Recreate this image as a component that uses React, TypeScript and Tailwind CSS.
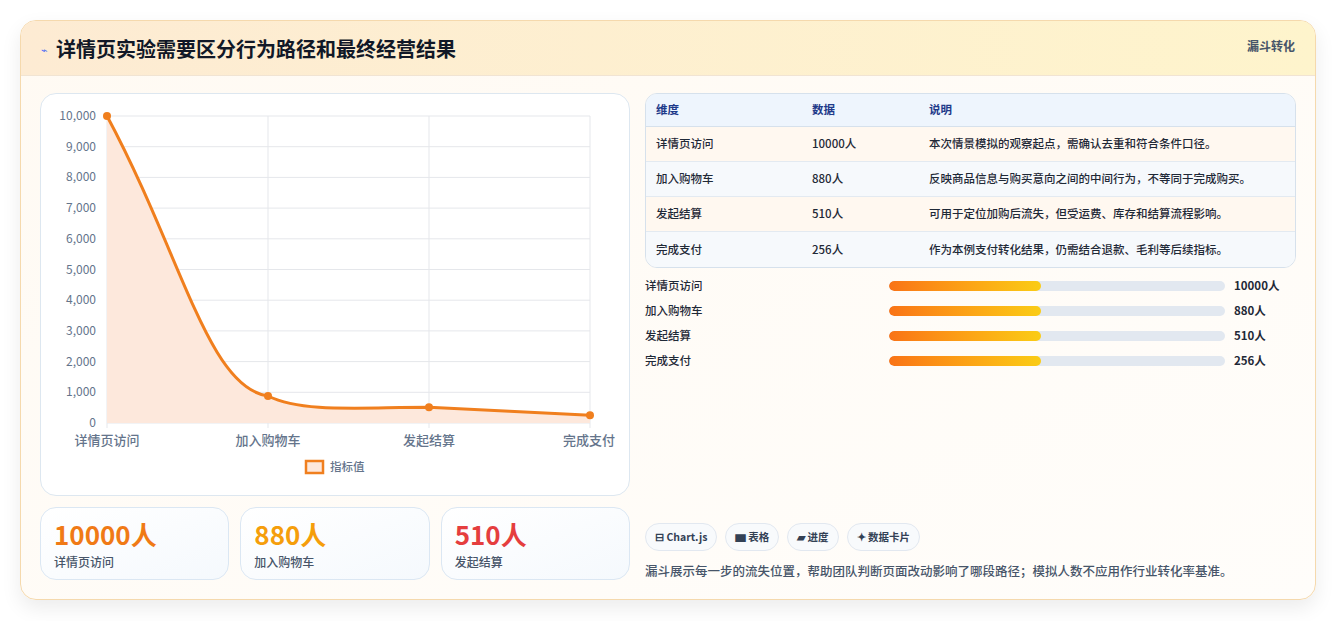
import React from "react";

const F = { fontFamily: '"Noto Sans CJK SC", "Noto Sans", sans-serif' };

const rows = [
  ["详情页访问", "10000人", "本次情景模拟的观察起点，需确认去重和符合条件口径。"],
  ["加入购物车", "880人", "反映商品信息与购买意向之间的中间行为，不等同于完成购买。"],
  ["发起结算", "510人", "可用于定位加购后流失，但受运费、库存和结算流程影响。"],
  ["完成支付", "256人", "作为本例支付转化结果，仍需结合退款、毛利等后续指标。"],
];

function Chart() {
  const ox = 66;
  const X = [105, 266, 427, 588].map((v) => v - 39);
  const yv = (v: number) => 422 - 93 - (v / 10000) * 307;
  const ticks = [0, 1000, 2000, 3000, 4000, 5000, 6000, 7000, 8000, 9000, 10000];
  const labels = ["详情页访问", "加入购物车", "发起结算", "完成支付"];
  const pts = [10000, 880, 510, 256].map((v, i) => [X[i], yv(v)]);
  const d = `M${pts[0][0]} ${pts[0][1]} C ${pts[0][0] + 75} ${pts[0][1] + 140}, ${pts[1][0] - 60} ${pts[1][1] - 8}, ${pts[1][0]} ${pts[1][1]} C ${pts[1][0] + 35} ${pts[1][1] + 17}, ${pts[2][0] - 70} ${pts[2][1]}, ${pts[2][0]} ${pts[2][1]} C ${pts[2][0] + 60} ${pts[2][1] + 3}, ${pts[3][0] - 60} ${pts[3][1] - 3}, ${pts[3][0]} ${pts[3][1]}`;
  return (
    <svg width="590" height="403" style={F}>
      {ticks.map((t) => (
        <g key={t}>
          <line x1={ox} x2={549} y1={yv(t)} y2={yv(t)} stroke="#e5e7eb" />
          <text x={55} y={yv(t) + 4} textAnchor="end" fontSize="12" fill="#64748b">{t.toLocaleString("en-US")}</text>
        </g>
      ))}
      {X.map((x, i) => (
        <line key={i} x1={x} x2={x} y1={yv(10000)} y2={yv(0) + 5} stroke="#e5e7eb" />
      ))}
      <path d={`${d} L ${X[3]} ${yv(0)} L ${X[0]} ${yv(0)} Z`} fill="#fde8dc" />
      <path d={d} fill="none" stroke="#f07f1e" strokeWidth="3" />
      {pts.map((p, i) => (
        <circle key={i} cx={p[0]} cy={p[1]} r="4" fill="#f07f1e" />
      ))}
      {labels.map((l, i) => (
        <text key={l} x={i === 3 ? 574 : X[i]} y={351} textAnchor={i === 3 ? "end" : "middle"} fontSize="13" fontWeight="500" fill="#64748b">{l}</text>
      ))}
      <rect x={265} y={367} width={17} height={12} fill="#fde8dc" stroke="#f07f1e" strokeWidth="2.5" />
      <text x={289} y={377} fontSize="11.5" fontWeight="500" fill="#64748b">指标值</text>
    </svg>
  );
}

export default function App() {
  return (
    <div className="bg-white px-5 pt-5 pb-5 w-[1336px] h-[621px] overflow-hidden" style={F}>
      <div className="rounded-2xl border border-[#f5d9ad] overflow-hidden shadow-[0_8px_20px_rgba(0,0,0,0.08)] bg-gradient-to-br from-[#fffaf3] to-[#fffdfa] h-[580px]">
        <div className="h-[55px] bg-gradient-to-r from-[#fdebd3] to-[#fef4cc] border-b border-[#f1e4d3] flex items-start justify-between px-5">
          <div className="flex items-center gap-2 mt-[13px]">
            <span className="text-[#4f6df5] text-[11px]">⌁</span>
            <span className="text-[20px] font-bold text-[#111827]">详情页实验需要区分行为路径和最终经营结果</span>
          </div>
          <span className="text-[12px] font-bold text-[#475569] mt-[16px]">漏斗转化</span>
        </div>
        <div className="flex gap-[15px] px-[19px] pt-[17px]">
          <div className="w-[590px] flex flex-col gap-[11px]">
            <div className="h-[403px] rounded-2xl border border-[#dde7f0] bg-white">
              <Chart />
            </div>
            <div className="grid grid-cols-3 gap-[11px]">
              {[["10000人", "text-[#f07a16]", "详情页访问"], ["880人", "text-[#f59e0b]", "加入购物车"], ["510人", "text-[#e53e3e]", "发起结算"]].map(([v, c, l]) => (
                <div key={l} className="h-[73px] rounded-2xl border border-[#dbe7f3] bg-gradient-to-br from-white to-[#f5f9fd] px-[13px] pt-[10px]">
                  <div className={`text-[26px] font-bold leading-[32px] ${c}`}>{v}</div>
                  <div className="text-[12px] font-medium text-[#475569] mt-[3px]">{l}</div>
                </div>
              ))}
            </div>
          </div>
          <div className="flex-1 flex flex-col">
            <div className="rounded-xl border border-[#d6e1ec] overflow-hidden text-[11.5px]">
              <div className="flex h-[33px] items-center bg-[#eef5fd] border-b border-[#d6e1ec] font-bold text-[#1e3a8a] px-[10px]">
                <div className="w-[156px]">维度</div>
                <div className="w-[117px]">数据</div>
                <div>说明</div>
              </div>
              {rows.map((r, i) => (
                <div key={i} className={`flex h-[35px] items-center px-[10px] text-[#1f2937] font-medium ${i % 2 === 0 ? "bg-[#fff8f0]" : "bg-[#f6f9fc]"} ${i < 3 ? "border-b border-[#e3eaf1]" : ""}`}>
                  <div className="w-[156px]">{r[0]}</div>
                  <div className="w-[117px]">{r[1]}</div>
                  <div>{r[2]}</div>
                </div>
              ))}
            </div>
            <div className="flex flex-col gap-[7px] mt-[9px] text-[11.5px] font-medium text-[#1f2937]">
              {rows.map((r) => (
                <div key={r[0]} className="flex items-center h-[18px]">
                  <div className="w-[244px]">{r[0]}</div>
                  <div className="w-[336px] h-[10px] rounded-full bg-[#e2e8f0] overflow-hidden">
                    <div className="w-[152px] h-full rounded-full bg-gradient-to-r from-[#f97316] to-[#facc15]" />
                  </div>
                  <div className="ml-[9px] font-bold">{r[1]}</div>
                </div>
              ))}
            </div>
            <div className="flex gap-[8px] mt-[153px] text-[10.5px] font-bold text-[#334155]">
              {["⊟ Chart.js", "▆ 表格", "▰ 进度", "✦ 数据卡片"].map((c) => (
                <span key={c} className="h-[28px] px-[9px] flex items-center rounded-full border border-[#e2e8f0] bg-[#f8fafc]">{c}</span>
              ))}
            </div>
            <div className="mt-[11px] text-[12.5px] font-medium text-[#475569]">漏斗展示每一步的流失位置，帮助团队判断页面改动影响了哪段路径；模拟人数不应用作行业转化率基准。</div>
          </div>
        </div>
      </div>
    </div>
  );
}
